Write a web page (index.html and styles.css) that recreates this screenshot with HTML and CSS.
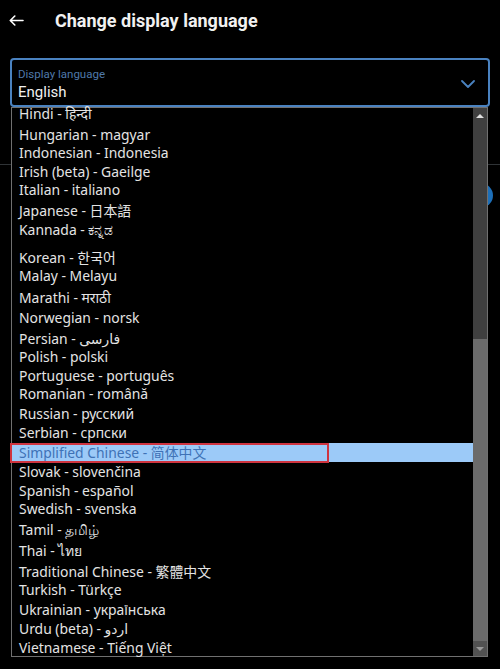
FILE: index.html
```html
<!DOCTYPE html>
<html lang="en">
<head>
    <meta charset="UTF-8">
    <meta name="viewport" content="width=device-width, initial-scale=1.0">
    <title>Change display language</title>
    <link rel="stylesheet" href="styles.css">
</head>
<body>

    <header class="topbar">
        <button class="back" aria-label="Back">
            <svg width="15" height="11" viewBox="0 0 15 11"><path d="M14 5.5H1.5M5.8 1L1.3 5.5L5.8 10" fill="none" stroke="#fff" stroke-width="1.6" stroke-linecap="round" stroke-linejoin="round"/></svg>
        </button>
        <h1>Change display language</h1>
    </header>

    <main class="content">
        <div class="field">
            <div class="field-text">
                <span class="field-label">Display language</span>
                <span class="field-value">English</span>
            </div>
            <svg class="chevron" width="14" height="8" viewBox="0 0 14 8"><path d="M1 1L7 7L13 1" fill="none" stroke="#4a82c0" stroke-width="1.8" stroke-linecap="round" stroke-linejoin="round"/></svg>
        </div>

        <div class="setting"></div>
        <div class="setting setting-toggle"><span class="toggle"></span></div>

        <!-- open dropdown of the select -->
        <div class="dropdown">
            <ul class="options">
                <li class="tall first">Hindi - हिन्दी</li>
                <li>Hungarian - magyar</li>
                <li>Indonesian - Indonesia</li>
                <li>Irish (beta) - Gaeilge</li>
                <li class="tall">Italian - italiano</li>
                <li class="mid">Japanese - 日本語</li>
                <li class="gap">Kannada - ಕನ್ನಡ</li>
                <li>Korean - 한국어</li>
                <li class="taller">Malay - Melayu</li>
                <li class="tall">Marathi - मराठी</li>
                <li class="tall">Norwegian - norsk</li>
                <li>Persian - فارسی</li>
                <li>Polish - polski</li>
                <li>Portuguese - português</li>
                <li class="mid">Romanian - română</li>
                <li class="mid">Russian - русский</li>
                <li class="mid">Serbian - српски</li>
                <li class="selected">Simplified Chinese - 简体中文</li>
                <li>Slovak - slovenčina</li>
                <li>Spanish - español</li>
                <li class="tall">Swedish - svenska</li>
                <li class="taller">Tamil - தமிழ்</li>
                <li class="tall">Thai - ไทย</li>
                <li>Traditional Chinese - 繁體中文</li>
                <li class="mid">Turkish - Türkçe</li>
                <li class="mid">Ukrainian - українська</li>
                <li>Urdu (beta) - اردو</li>
                <li>Vietnamese - Tiếng Việt</li>
            </ul>
            <div class="scrollbar">
                <span class="arrow arrow-up"></span>
                <div class="track"><div class="thumb"></div></div>
                <span class="arrow arrow-down"></span>
            </div>
        </div>
    </main>

</body>
</html>
```

FILE: styles.css
```css
html, body {
    height: 100%;
}
body {
    margin: 0;
    min-height: 669px;
    background-color: #000;
    color: #e7e9ea;
    font-family: Roboto, "Noto Sans", sans-serif;
}
.topbar {
    height: 40px;
    display: flex;
    align-items: center;
    padding-left: 8px;
}
.back {
    background: none;
    border: none;
    padding: 0;
    width: 16px;
    height: 16px;
    display: flex;
    align-items: center;
    justify-content: center;
    margin-right: 31px;
}
.topbar h1 {
    margin: 0;
    font-size: 18px;
    font-weight: 700;
    color: #f1f1f1;
}
.content {
    position: relative;
    height: calc(100% - 40px);
    padding-top: 18px;
    box-sizing: border-box;
}
.field {
    margin: 0 10px;
    height: 49px;
    box-sizing: border-box;
    border: 2px solid #4a82c0;
    border-radius: 4px;
    display: flex;
    align-items: center;
    padding: 0 13px 0 6px;
}
.field-text {
    flex: 1;
    display: flex;
    flex-direction: column;
}
.field-label {
    font-size: 11.5px;
    line-height: 16px;
    color: #4f79aa;
    margin-top: 2px;
}
.field-value {
    font-size: 15px;
    line-height: 20px;
    color: #f1f1f1;
}
.chevron {
    margin-top: 2px;
}
.setting {
    height: 57px;
    border-bottom: 1px solid #2f3336;
}
.setting-toggle {
    border-bottom: none;
    display: flex;
    justify-content: flex-end;
    align-items: center;
    padding-right: 7px;
    height: 60px;
}
.toggle {
    width: 25px;
    height: 25px;
    border-radius: 50%;
    background-color: #1d6fb8;
}
.dropdown {
    position: absolute;
    top: 67px;
    left: 11px;
    width: 477px;
    height: 550px;
    box-sizing: border-box;
    border: 1px solid #707070;
    background-color: #000;
    display: flex;
}
.options {
    flex: 1;
    list-style: none;
    margin: -4px 0 0 0;
    padding: 0;
    font-family: "Noto Sans", "Noto Sans CJK SC", "DejaVu Sans", sans-serif;
    font-size: 13.9px;
    color: #e4e4e4;
}
.options li {
    height: 18.5px;
    line-height: 20.5px;
    padding-left: 7px;
    white-space: nowrap;
}
.options li.mid {
    height: 19.5px;
}
.options li.tall {
    height: 20.5px;
}
.options li.taller {
    height: 21.5px;
}
.options li.gap {
    height: 27.5px;
}
.options li.first {
    height: 20.5px;
}
.options li.selected {
    position: relative;
    height: 19.5px;
    background-color: #9ccaf8;
    color: #3f72b6;
}
.options li.selected::after {
    content: "";
    position: absolute;
    left: -2px;
    top: 0;
    width: 319px;
    height: 20px;
    box-sizing: border-box;
    border: 2px solid #cf3440;
}
.scrollbar {
    width: 14px;
    display: flex;
    flex-direction: column;
    background-color: #3f3f3f;
}
.track {
    flex: 1;
    display: flex;
    flex-direction: column;
    justify-content: flex-end;
}
.thumb {
    height: 302px;
    background-color: #6b6b6b;
}
.arrow {
    height: 15px;
    display: flex;
    align-items: center;
    justify-content: center;
}
.arrow::before {
    content: "";
    border-left: 4px solid transparent;
    border-right: 4px solid transparent;
}
.arrow-up::before {
    border-bottom: 4px solid #e0e0e0;
}
.arrow-down {
    background-color: #525252;
}
.arrow-down::before {
    border-top: 4px solid #9a9a9a;
}
```
